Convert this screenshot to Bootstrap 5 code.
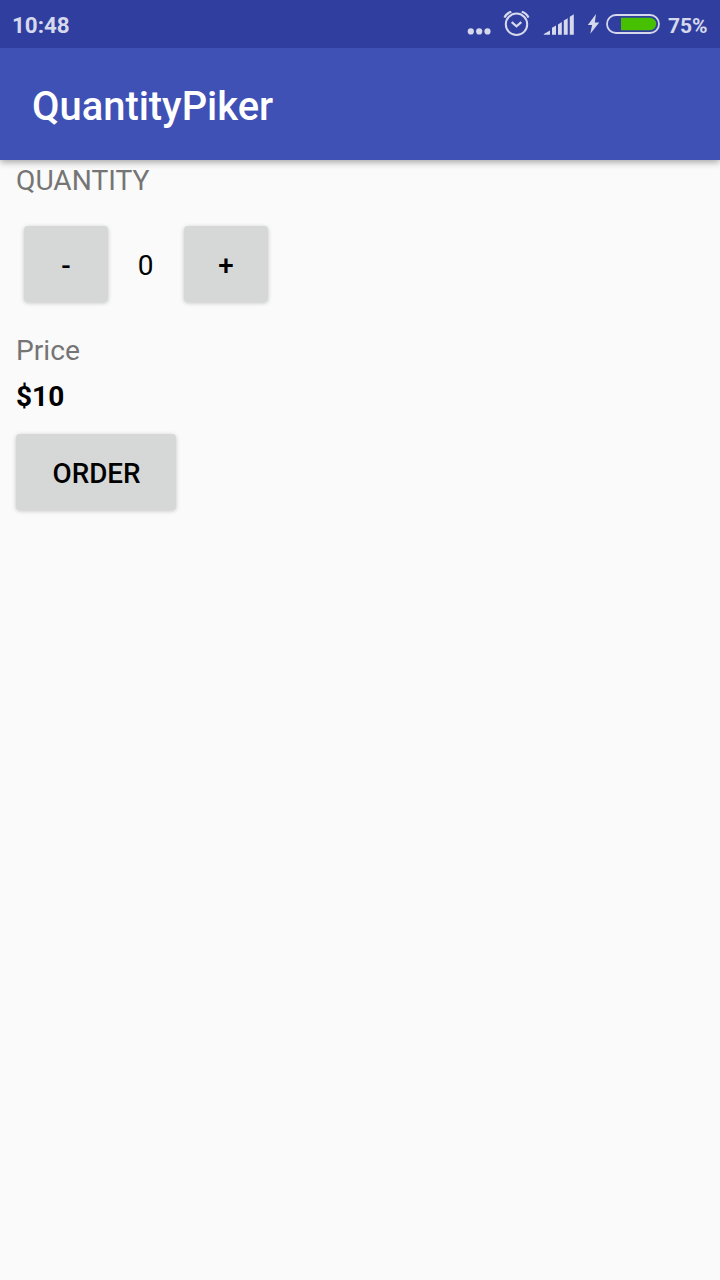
<!DOCTYPE html>
<html lang="en">
<head>
<meta charset="utf-8">
<meta name="viewport" content="width=device-width, initial-scale=1">
<title>QuantityPiker</title>
<link href="https://cdn.jsdelivr.net/npm/bootstrap@5.3.0/dist/css/bootstrap.min.css" rel="stylesheet">
<style>
  body { font-family: Roboto, sans-serif; font-size: 28px; line-height: 33px; color: #000; background: #fafafa; min-height: 100vh; }
  .status-bar { height: 48px; padding: 2px 12px 0 12px; background: #303f9f; color: #d6d9ec; font-size: 22px; line-height: 26px; font-weight: 700; }
  .status-bar svg { display: block; flex: none; }
  .clock-text { font-size: 22.4px; }
  .battery-level { font-size: 21px; width: 40px; margin-left: 8px; white-space: nowrap; padding-top: 1px; }
  .app-bar { height: 112px; padding: 5px 32px 0; background: #3f51b5; box-shadow: 0 2px 7px rgba(0,0,0,.36); clip-path: inset(0 0 -12px 0); }
  .app-bar .navbar-brand { font-size: 39.9px; line-height: 47px; font-weight: 500; color: #fff; }
  .order-form { padding: 4px 16px 20px; }
  .label-text { color: #757575; font-size: 28.2px; }
  .btn-raised { --bs-btn-bg: #d6d8d7; --bs-btn-color: #000; --bs-btn-hover-bg: #cacccb; --bs-btn-border-width: 0; --bs-btn-border-radius: 4px;
    --bs-btn-padding-x: 0; --bs-btn-padding-y: 0; --bs-btn-font-size: 27.8px; --bs-btn-font-weight: 500; --bs-btn-line-height: 33px;
    height: 76px; padding-top: 2px; box-shadow: 0 1px 4px rgba(0,0,0,.22); }
  .btn-step { width: 84px; }
  .btn-order { width: 160px; margin-top: 21px; padding-left: 1px; }
  .stepper { margin: 29px 0 32px 8px; }
  .step-count { width: 76px; padding-top: 2px; padding-right: 1px; }
  .price-value { margin-top: 13px; }
</style>
</head>
<body>
<div class="status-bar d-flex align-items-center">
  <span class="clock-text me-auto">10:48</span>
  <svg width="136" height="46" viewBox="465 2 136 46" fill="#d6d9ec" aria-hidden="true">
    <g><circle cx="470.8" cy="31.4" r="3.1"/><circle cx="479.2" cy="31.4" r="3.1"/><circle cx="487.5" cy="31.4" r="3.1"/></g>
    <g fill="none" stroke="#d6d9ec">
      <circle cx="516.5" cy="24.3" r="10.7" stroke-width="2"/>
      <path d="M511.7 22.2l4.8 4.1 4.8-4.1" stroke-width="2.2"/>
      <path d="M504.5 17.6Q506.3 13.4 511.3 11.8M528.5 17.6Q526.7 13.4 521.7 11.8" stroke-width="2.2"/>
    </g>
    <path d="M543.8 34.7v-.6l6.2-3.6v4.2zM552 34.7v-6.9l4-2.2v9.1zM558 34.7V24.4l3.8-2.4v12.7zM563.8 34.7V20.6l3.9-2.4v16.5zM569.8 34.7V16.8l4-2.5v20.4z"/>
    <path d="M596 14l-8.2 11h4.3l-1.8 8.8 8.9-11.4h-4.4z"/>
  </svg>
  <svg class="ms-1" width="55" height="46" viewBox="605 2 55 46" aria-hidden="true">
    <rect x="607" y="15" width="52" height="18" rx="9" fill="none" stroke="#d6d9ec" stroke-width="1.8"/>
    <path d="M621 17.8h29a6.2 6.2 0 0 1 0 12.4h-29z" fill="#46c000"/>
  </svg>
  <span class="battery-level">75%</span>
</div>
<nav class="app-bar navbar position-relative">
  <span class="navbar-brand m-0 p-0">QuantityPiker</span>
</nav>
<main class="order-form">
  <div class="label-text">QUANTITY</div>
  <div class="stepper d-flex align-items-center">
    <button type="button" class="btn btn-raised btn-step">-</button>
    <span class="step-count text-center">0</span>
    <button type="button" class="btn btn-raised btn-step">+</button>
  </div>
  <div class="label-text">Price</div>
  <div class="price-value fw-bold">$10</div>
  <button type="button" class="btn btn-raised btn-order text-uppercase">Order</button>
</main>
<script src="https://cdn.jsdelivr.net/npm/bootstrap@5.3.0/dist/js/bootstrap.bundle.min.js"></script>
</body>
</html>
